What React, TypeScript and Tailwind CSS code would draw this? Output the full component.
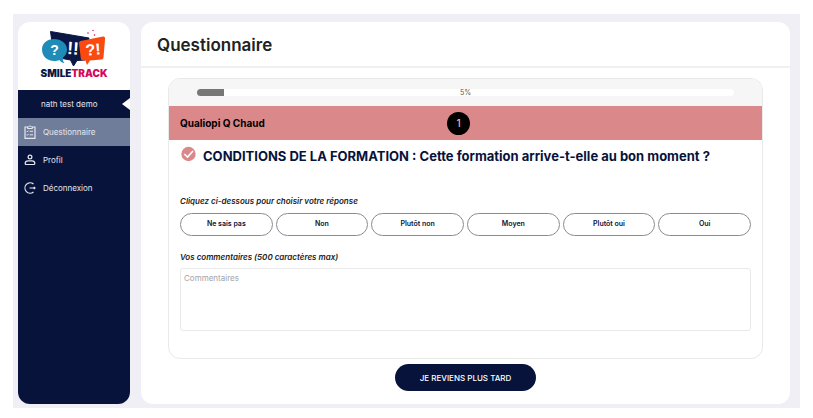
import clsx from 'clsx';
import { useState } from 'react';

const answers = ['Ne sais pas', 'Non', 'Plutôt non', 'Moyen', 'Plutôt oui', 'Oui'];

function Logo() {
	return (
		<svg viewBox="0 0 66 50" className="h-[50px] w-[66px] overflow-visible" role="img" aria-label="SmileTrack">
			<path d="M9.500 2.500 L48 9 L44 31 L36 31.500 L32.500 37 L29.500 31 L13 28 Z" fill="#0b1744" stroke="#0b1744" strokeLinejoin="round" />
			<path
				d="M13 10 C6 10 1 14.500 1 20.500 C1 27 6 32 13 32 C15 32 17 31.700 18.500 31 C19.500 33 21.500 34 23.500 34 C22 32.500 21.600 31 22 28.500 C24.500 26.500 26 24 26 20.500 C26 14.500 20 10 13 10 Z"
				fill="#1f8cb8"
			/>
			<path
				d="M39.500 12 L62 7.600 Q64.200 7.300 64.100 9.500 L62.500 28.500 Q62.300 30.300 60.500 30.500 L49 31.500 L46 36 L44.500 31.500 L41.500 31.200 Q40 31 39.800 29.500 L38 14 Q37.900 12.300 39.500 12 Z"
				fill="#fb4a10"
			/>
			<circle cx="47" cy="4" r=".8" fill="#d4145a" />
			<circle cx="52" cy="1.500" r=".8" fill="#e5405a" />
			<circle cx="53.500" cy="6" r=".8" fill="#d4145a" />
			<g fill="#fff" fontFamily="'Liberation Sans', sans-serif" fontWeight="700" textAnchor="middle">
				<text x="13.500" y="26" fontSize="14">?</text>
				<text x="32" y="25.500" fontSize="18" transform="rotate(4 32 20)">!!</text>
				<text x="52" y="26" fontSize="16" transform="rotate(-5 52 21)">?!</text>
			</g>
			<text x="33" y="47.500" fontSize="10" fontFamily="Inter, sans-serif" fontWeight="900" textAnchor="middle" fill="#0b1744">
				SMILE<tspan fill="#d6085c">TRACK</tspan>
			</text>
		</svg>
	);
}

function ClipboardIcon() {
	return (
		<svg viewBox="0 0 12 14" className="h-[14px] w-3" fill="none" stroke="currentColor">
			<path d="M3.500 2 H1 V13.300 H11 V2 H8.500" strokeWidth="1.200" />
			<path d="M3.500 3.500 V1.800 H4.800 Q6 -.4 7.200 1.800 H8.500 V3.500 Z" />
			<path d="M5.800 6.300 H9 M5.800 9.800 H9" />
			<path d="M2.700 6 L3.400 6.800 L4.600 5.500 M2.700 9.500 L3.400 10.300 L4.600 9" strokeWidth=".9" />
		</svg>
	);
}

function ProfileIcon() {
	return (
		<svg viewBox="0 0 12 14" className="h-[14px] w-3" fill="none" stroke="currentColor" strokeWidth="1.200">
			<circle cx="6" cy="4" r="1.900" />
			<path d="M4 7.800 H8 Q10.800 7.800 10.800 10.500 Q10.800 11.500 9.800 11.500 H2.200 Q1.200 11.500 1.200 10.500 Q1.200 7.800 4 7.800 Z" />
		</svg>
	);
}

function LogoutIcon() {
	return (
		<svg viewBox="0 0 12 14" className="h-[14px] w-3" fill="none" stroke="currentColor" strokeWidth="1.200">
			<path d="M9.500 3 A5.200 5.200 0 1 0 9.500 11" />
			<path d="M5.500 7 H11 M9.800 5.800 L11 7 L9.800 8.200" />
		</svg>
	);
}

const links = [
	{ label: 'Questionnaire', Icon: ClipboardIcon, active: true },
	{ label: 'Profil', Icon: ProfileIcon, active: false },
	{ label: 'Déconnexion', Icon: LogoutIcon, active: false },
];

function Sidebar() {
	return (
		<aside className="flex w-28 shrink-0 flex-col text-[#e4e7f0]">
			<div className="flex h-[68px] justify-center rounded-t-xl bg-white pt-[7px]">
				<Logo />
			</div>
			<div className="flex-1 rounded-b-xl bg-[#07133b]">
				<div className="flex h-7 items-center justify-between pl-[23px] text-[8px]">
					<span>nath test demo</span>
					<svg viewBox="0 0 8 12" className="h-3 w-2" fill="#fff">
						<path d="M8 0 V12 L0 6 Z" />
					</svg>
				</div>
				<nav>
					{links.map(({ label, Icon, active }) => (
						<a
							key={label}
							href="#"
							className={clsx('flex h-7 items-center gap-[7px] pl-[6px] text-[8px]', active && 'bg-[#707d9a]')}
						>
							<Icon />
							<span>{label}</span>
						</a>
					))}
				</nav>
			</div>
		</aside>
	);
}

export default function App() {
	const [answer, setAnswer] = useState('');
	const [comment, setComment] = useState('');

	return (
		<div className="min-h-screen bg-white px-[13px] pt-[14px] pb-[10px] font-['Inter',sans-serif]">
			<div className="flex gap-[11px] bg-[#f0eff6] pt-2 pr-[10px] pb-1 pl-[5px]">
				<Sidebar />
				<main className="min-w-0 flex-1 rounded-xl bg-white pb-[13px]">
					<h1 className="border-b-2 border-[#f0f0f1] pt-[11px] pb-[9px] pl-4 text-[17px] leading-6 font-semibold text-[#222]">
						Questionnaire
					</h1>
					<section className="mx-[27px] mt-[10px] overflow-hidden rounded-xl border border-[#e9e9ea]">
						{/* progress */}
						<div className="bg-[#f6f6f6] px-7 py-[10px]">
							<div className="relative h-[7px] overflow-hidden rounded bg-white">
								<div className="h-full w-[5%] bg-[#777]" />
								<span className="absolute inset-0 text-center text-[7px] leading-[7px] text-[#555]">5%</span>
							</div>
						</div>
						<div className="grid h-[34px] grid-cols-[1fr_auto_1fr] items-center bg-[#db888b] px-[11px]">
							<h2 className="text-[10px] font-bold text-black">Qualiopi Q Chaud</h2>
							<span className="mr-[14px] grid h-[23px] w-[23px] place-items-center rounded-full bg-black text-[10px] font-medium text-[#f0b5b7]">
								1
							</span>
						</div>
						<div className="px-[11px] pt-[6px] pb-[27px]">
							<div className="flex gap-[7px]">
								<svg viewBox="0 0 16 16" className="h-4 w-4 shrink-0">
									<circle cx="8.500" cy="8" r="7.200" fill="#db888b" />
									<path d="M4.300 8 L7.500 11 L13 5" fill="none" stroke="#fff" strokeWidth="1.600" />
								</svg>
								<h3 className="text-[13px] leading-5 font-bold text-[#07133b]">
									CONDITIONS DE LA FORMATION : Cette formation arrive-t-elle au bon moment ?
								</h3>
							</div>
							<p className="mt-[29px] text-[8px] leading-3 font-semibold text-[#222] italic">
								Cliquez ci-dessous pour choisir votre réponse
							</p>
							<div className="mt-[6px] grid grid-cols-6 gap-[3px]">
								{answers.map((label) => (
									<button
										key={label}
										type="button"
										aria-pressed={answer === label}
										onClick={() => setAnswer(label)}
										className={clsx(
											'h-[23px] rounded-full border border-[#8a8b92] text-[7px] font-semibold text-[#07133b]',
											answer === label && 'bg-[#db888b]'
										)}
									>
										{label}
									</button>
								))}
							</div>
							<label htmlFor="comment" className="mt-[15px] block text-[8px] leading-3 font-semibold text-[#222] italic">
								Vos commentaires (500 caractères max)
							</label>
							<textarea
								id="comment"
								maxLength={500}
								value={comment}
								onChange={(e) => setComment(e.target.value)}
								placeholder="Commentaires"
								className="mt-[5px] block h-[63px] w-full resize-none rounded-[3px] border border-[#e9e9eb] px-[3px] py-[3px] text-[8px] leading-3 placeholder:text-[#a3a3a3]"
							/>
						</div>
					</section>
					<button
						type="button"
						className="mx-auto mt-[5px] block h-[27px] rounded-full bg-[#07133b] px-[25px] text-[8px] font-medium text-white"
					>
						JE REVIENS PLUS TARD
					</button>
				</main>
			</div>
		</div>
	);
}
